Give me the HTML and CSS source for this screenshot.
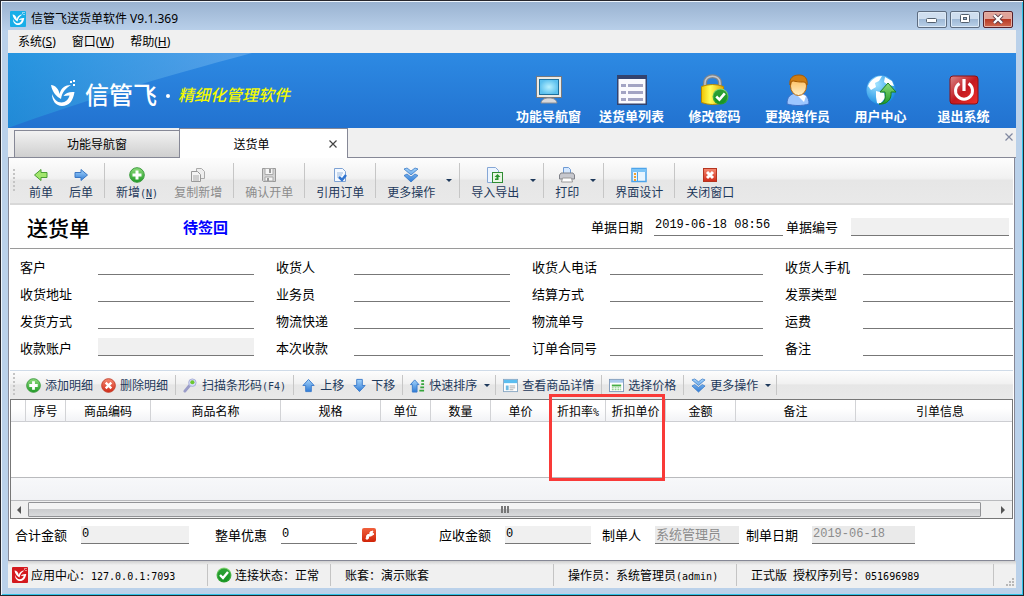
FILE: index.html
```html
<!DOCTYPE html>
<html lang="zh-CN">
<head>
  <title>信管飞送货单软件 V9.1.369</title>
  <meta charset="UTF-8">
  <meta name="viewport" content="width=device-width, initial-scale=1.0">
  <link rel="stylesheet" href="styles.css">
</head>
<body>
  <!-- shared icons -->
  <svg class="defs" aria-hidden="true">
    <defs>
      <linearGradient id="g-green" x1="0" y1="0" x2="0" y2="1"><stop offset="0" stop-color="#8fdc7c"/><stop offset="1" stop-color="#1f9a26"/></linearGradient>
      <linearGradient id="g-blue" x1="0" y1="0" x2="0" y2="1"><stop offset="0" stop-color="#a5d4fb"/><stop offset="1" stop-color="#2f7bd6"/></linearGradient>
      <linearGradient id="g-red" x1="0" y1="0" x2="0" y2="1"><stop offset="0" stop-color="#f58a72"/><stop offset="1" stop-color="#d02a17"/></linearGradient>
      <linearGradient id="g-power" x1="0" y1="0" x2="1" y2="1"><stop offset="0" stop-color="#d88a8a"/><stop offset=".5" stop-color="#c4191f"/><stop offset="1" stop-color="#f0302a"/></linearGradient>
      <linearGradient id="g-lock" x1="0" y1="0" x2="1" y2="0"><stop offset="0" stop-color="#f0c400"/><stop offset=".4" stop-color="#ffff5a"/><stop offset="1" stop-color="#e8a800"/></linearGradient>
      <linearGradient id="g-face" x1="0" y1="0" x2="0" y2="1"><stop offset="0" stop-color="#ffb64c"/><stop offset="1" stop-color="#fff0c8"/></linearGradient>
      <radialGradient id="g-screen"><stop offset="0" stop-color="#b8f1ff"/><stop offset="1" stop-color="#5cc0ee"/></radialGradient>
      <radialGradient id="g-globe" cx=".35" cy=".3" r=".8"><stop offset="0" stop-color="#9fe2ff"/><stop offset="1" stop-color="#0d86e0"/></radialGradient>
      <linearGradient id="g-swoosh" x1="0" y1="0" x2="1" y2="0"><stop offset="0" stop-color="#1fa0dc" stop-opacity=".5"/><stop offset="1" stop-color="#7fb8f0" stop-opacity=".5"/></linearGradient>
    </defs>
    <symbol id="i-bird" viewBox="0 0 26 28">
      <path d="M1 5c4 0 8 4 8.500 9C11 8 15 5 21 5c-5 3-9 7-10 14-4-2-9-7-10-14z"/>
      <path d="M2 14c0 7 4 12 10 12 7 0 11-5 12.500-14-5-.5-9 1-11 4l6-.5c-1 4-4 7-8 7C7 22.500 4 19 2 14z"/>
      <path d="M20 1h2v2h-2zM23 0h2v2h-2zM23 4h2v2h-2z"/>
    </symbol>
    <symbol id="i-plus" viewBox="0 0 16 16">
      <circle cx="8" cy="8" r="7.3" fill="url(#g-green)" stroke="#3d9c3f"/>
      <path d="M6.500 3.500h3v3h3v3h-3v3h-3v-3h-3v-3h3z" fill="#fff"/>
    </symbol>
    <symbol id="i-down2" viewBox="0 0 16 16">
      <path d="M1 2l3-1 4 3 4-3 3 1-7 6zM1 8.500l3-1.500 4 3 4-3 3 1.500-7 6.500z" fill="url(#g-blue)" stroke="#2b6fc0" stroke-width=".7"/>
    </symbol>
    <symbol id="i-check" viewBox="0 0 16 16">
      <circle cx="8" cy="8" r="7.500" fill="url(#g-green)"/><circle cx="8" cy="8" r="6.500" fill="#129022" opacity=".75"/>
      <path d="M4 8l3 3 5-6" fill="none" stroke="#fff" stroke-width="2.400"/>
    </symbol>
  </svg>

  <div class="window">
    <header class="titlebar">
      <svg class="title-icon" viewBox="0 0 16 16"><rect width="16" height="16" rx="1" fill="#18aee8"/><use href="#i-bird" x="2" y="1" width="13" height="14" fill="#fff"/></svg>
      <span class="title-text">信管飞送货单软件 V9.1.369</span>
      <button class="win-btn" aria-label="最小化"><svg width="12" height="10"><rect x=".5" y="4.500" width="10" height="4" rx="1" fill="#fff" stroke="#53606f"/></svg></button>
      <button class="win-btn" aria-label="最大化"><svg width="12" height="10"><rect x="1.500" y=".5" width="9" height="8" rx="1" fill="#fff" stroke="#53606f"/><rect x="4.500" y="3.500" width="3" height="2" fill="#9db6d2" stroke="#53606f"/></svg></button>
      <button class="win-btn win-close" aria-label="关闭"><svg width="12" height="10"><path d="M2 1l8 8M10 1L2 9" stroke="#5b3a45" stroke-width="4"/><path d="M2 1l8 8M10 1L2 9" stroke="#fff" stroke-width="2.400"/></svg></button>
    </header>

    <nav class="menubar">
      <button class="menu">系统(<u>S</u>)</button>
      <button class="menu">窗口(<u>W</u>)</button>
      <button class="menu">帮助(<u>H</u>)</button>
    </nav>

    <div class="banner">
      <svg class="swoosh" viewBox="0 0 244 75" preserveAspectRatio="none"><path d="M0 0h244C150 25 75 48 0 75z" fill="url(#g-swoosh)"/></svg>
      <svg class="brand-logo" viewBox="0 0 26 28" fill="#fff"><use href="#i-bird"/></svg>
      <span class="brand">信管飞</span>
      <span class="dot"></span>
      <em class="slogan">精细化管理软件</em>
      <div class="banner-nav">
        <button class="nav-btn">
          <svg viewBox="0 0 32 32"><rect x="3.500" y="2.500" width="25" height="21" fill="#eceae4" stroke="#77787c"/><rect x="6.500" y="5.500" width="19" height="15" fill="url(#g-screen)" stroke="#1d6f9c"/><path d="M8 29c1-4 4-5 8-5s7 1 8 5z" fill="#d9d9dc" stroke="#8f9095"/></svg>
          功能导航窗
        </button>
        <button class="nav-btn">
          <svg viewBox="0 0 32 32"><path d="M1 1h30v30H1z" fill="#33436f"/><path d="M2.500 5h27v24.500h-27z" fill="#fafafe"/><path d="M5 10h5v3H5zM5 17h5v3H5zM5 24h5v3H5zM12 10h15v3H12zM12 17h15v3H12zM12 24h15v3H12z" fill="#a3a4c4"/></svg>
          送货单列表
        </button>
        <button class="nav-btn">
          <svg viewBox="0 0 32 32"><path d="M6 15V9c0-9 15-9 15 0v6" fill="none" stroke="#7f858c" stroke-width="4"/><path d="M6 15V9c0-9 15-9 15 0v6" fill="none" stroke="#c2c6ca" stroke-width="1.500"/><path d="M2.500 12.500q11-4 22 0v16q-11 4-22 0z" fill="url(#g-lock)" stroke="#b88a00"/><use href="#i-check" x="13" y="14" width="17" height="17"/></svg>
          修改密码
        </button>
        <button class="nav-btn">
          <svg viewBox="0 0 32 32"><path d="M5 30c0-8 4-10 9-11h5c5 1 8 4 8 11-7 2-15 2-22 0z" fill="#9cc6ff" stroke="#3d6fc4"/><path d="M14 20l5 0 5 2-2 6z" fill="#fff"/><ellipse cx="16.500" cy="12" rx="8" ry="9.500" fill="url(#g-face)" stroke="#b56a12"/><path d="M8 11C7 4 11 1 17 1s9 4 8 10c-1-3-3-3-5-3-5 0-8-1-9-1-2 0-2 2-3 4z" fill="#cf7d12" stroke="#a65a05"/></svg>
          更换操作员
        </button>
        <button class="nav-btn">
          <svg viewBox="0 0 32 32"><circle cx="16" cy="16" r="14.500" fill="url(#g-globe)"/><path d="M3 12C6 5 12 2 17 2l-3 5-4 2 1 4-5 3zM20 3l7 4 2 5-6-1-4-3zM11 17l8 2 1 5-5 6-3-1-1-6z" fill="#fff"/><path d="M14 30c6-1 7-6 6-12h-5l8-9 8 9h-5c1 7-4 13-12 12z" fill="url(#g-green)" stroke="#1b7f1c"/></svg>
          用户中心
        </button>
        <button class="nav-btn">
          <svg viewBox="0 0 32 32"><rect x="2" y="2" width="28" height="28" rx="3" fill="url(#g-power)" stroke="#8c1014"/><path d="M11.500 9.500a8.500 8.500 0 1 0 9 0" fill="none" stroke="#fff" stroke-width="3"/><path d="M16 5v12" stroke="#fff" stroke-width="3.200"/></svg>
          退出系统
        </button>
      </div>
    </div>

    <div class="tabs">
      <button class="tab">功能导航窗</button>
      <button class="tab active">送货单<svg class="tab-x" viewBox="0 0 8 8"><path d="M.5.5l7 7M7.500.5l-7 7" stroke="#444" stroke-width="1.200"/></svg></button>
      <button class="tabs-x" aria-label="关闭标签"><svg viewBox="0 0 8 8"><path d="M.5.5l7 7M7.500.5l-7 7" stroke="#8088a0" stroke-width="1.200"/></svg></button>
    </div>

    <main class="page">
      <div class="toolbar">
        <span class="handle"></span>
        <button class="tool"><svg viewBox="0 0 16 16"><path d="M1.500 8L8 2.500v3h6v5H8v3z" fill="#a2e66c" stroke="#4a9e35"/></svg>前单</button>
        <button class="tool"><svg viewBox="0 0 16 16"><path d="M14.500 8L8 2.500v3H2v5h6v3z" fill="url(#g-blue)" stroke="#3c78c4"/></svg>后单</button>
        <span class="sep"></span>
        <button class="tool"><svg viewBox="0 0 16 16"><use href="#i-plus"/></svg><span>新增<span class="half">(<u>N</u>)</span></span></button>
        <button class="tool" disabled><svg viewBox="0 0 16 16"><path d="M6.500 1.500h5l3 3v7h-8z" fill="#eee" stroke="#aaa"/><path d="M1.500 4.500h6l3 3v7h-9z" fill="#f4f4f4" stroke="#999"/><path d="M3 9h6M3 11h6M3 13h6" stroke="#aaa"/></svg>复制新增</button>
        <span class="sep"></span>
        <button class="tool" disabled><svg viewBox="0 0 16 16"><path d="M1.500 1.500h13v13h-12l-1-1z" fill="#d4d4d4" stroke="#999"/><path d="M4 1.500h8v6H4zM4 10h8v4H4z" fill="#f5f5f5" stroke="#aaa"/><path d="M8 2h2v4H8zM6 11h2v3H6z" fill="#999"/></svg>确认开单</button>
        <span class="sep"></span>
        <button class="tool"><svg viewBox="0 0 16 16"><path d="M2.500 1.500h8l3 3v10h-11z" fill="#f4f9ff" stroke="#7ea2d4"/><path d="M5 6h6M5 8h5M5 10h3" stroke="#9bb8dc"/><path d="M7 10l3 3 4-5" fill="none" stroke="#2f74d0" stroke-width="2.500"/></svg>引用订单</button>
        <span class="sep"></span>
        <button class="tool"><svg viewBox="0 0 16 16"><use href="#i-down2"/></svg>更多操作</button>
        <button class="drop" aria-label="更多操作选项"></button>
        <span class="sep"></span>
        <button class="tool"><svg viewBox="0 0 16 16"><path d="M.5.5h8l3 3v12H.5z" fill="#edf5ff" stroke="#86a7d6"/><rect x="5.500" y="5.500" width="10" height="10" fill="#e9f7e4" stroke="#2f8c33"/><path d="M10.500 7l3 3h-2v3H8v-1.500h1.500V10h-2z" fill="#2a9430"/></svg>导入导出</button>
        <button class="drop" aria-label="导入导出选项"></button>
        <span class="sep"></span>
        <button class="tool"><svg viewBox="0 0 16 16"><path d="M4.500 6V.5h5l2 2V6" fill="#d5e8ff" stroke="#6e9ad4"/><path d="M2 6h12l1.500 2v4h-15V8z" fill="#c7c8ce" stroke="#808289"/><path d="M3.500 11h9l1 4h-11z" fill="#fff" stroke="#999"/></svg>打印</button>
        <button class="drop" aria-label="打印选项"></button>
        <span class="sep"></span>
        <button class="tool"><svg viewBox="0 0 16 16"><rect x="1" y="1.500" width="14" height="13" fill="#e8f5ff" stroke="#4da4ea" stroke-width="1.500"/><path d="M1 2h14v3H1z" fill="#7cc4f7"/><path d="M6.500 5v9" stroke="#4da4ea"/><path d="M3 6h2v2H3zM3 9h2v2H3zM3 12h2v2H3z" fill="#f0a030"/></svg>界面设计</button>
        <span class="sep"></span>
        <button class="tool"><svg viewBox="0 0 16 16"><rect x="1.500" y="1.500" width="13" height="13" fill="url(#g-red)" stroke="#b5341f"/><path d="M5 5l6 6M11 5l-6 6" stroke="#fff" stroke-width="3"/></svg>关闭窗口</button>
      </div>

      <div class="doc-head">
        <h1>送货单</h1>
        <strong class="state">待签回</strong>
        <div class="doc-field"><label for="doc-date">单据日期</label><input id="doc-date" class="line" value="2019-06-18 08:56"></div>
        <div class="doc-field doc-no"><label for="doc-no">单据编号</label><input id="doc-no" class="line gray" readonly></div>
      </div>

      <form class="form">
        <div class="field"><label for="f1">客户</label><input id="f1" class="line"></div>
        <div class="field"><label for="f2">收货人</label><input id="f2" class="line"></div>
        <div class="field"><label for="f3">收货人电话</label><input id="f3" class="line"></div>
        <div class="field"><label for="f4">收货人手机</label><input id="f4" class="line"></div>
        <div class="field"><label for="f5">收货地址</label><input id="f5" class="line"></div>
        <div class="field"><label for="f6">业务员</label><input id="f6" class="line"></div>
        <div class="field"><label for="f7">结算方式</label><input id="f7" class="line"></div>
        <div class="field"><label for="f8">发票类型</label><input id="f8" class="line"></div>
        <div class="field"><label for="f9">发货方式</label><input id="f9" class="line"></div>
        <div class="field"><label for="f10">物流快递</label><input id="f10" class="line"></div>
        <div class="field"><label for="f11">物流单号</label><input id="f11" class="line"></div>
        <div class="field"><label for="f12">运费</label><input id="f12" class="line"></div>
        <div class="field"><label for="f13">收款账户</label><input id="f13" class="line gray" readonly></div>
        <div class="field"><label for="f14">本次收款</label><input id="f14" class="line"></div>
        <div class="field"><label for="f15">订单合同号</label><input id="f15" class="line"></div>
        <div class="field"><label for="f16">备注</label><input id="f16" class="line"></div>
      </form>

      <div class="toolbar detail-bar">
        <span class="handle"></span>
        <button class="act"><svg viewBox="0 0 16 16"><use href="#i-plus"/></svg>添加明细</button>
        <button class="act"><svg viewBox="0 0 16 16"><circle cx="8" cy="8" r="7.300" fill="url(#g-red)" stroke="#c4402c"/><path d="M5 5l6 6M11 5l-6 6" stroke="#fff" stroke-width="2.500"/></svg>删除明细</button>
        <span class="sep"></span>
        <button class="act"><svg viewBox="0 0 16 16"><path d="M2 14l5-6" stroke="#9a9cc8" stroke-width="3" stroke-linecap="round"/><circle cx="10" cy="5" r="4" fill="#d3dcf5" stroke="#a9aed8"/><circle cx="10" cy="4.500" r="2.200" fill="#6cc82e"/></svg><span>扫描条形码<span class="half">(F4)</span></span></button>
        <span class="sep"></span>
        <button class="act"><svg viewBox="0 0 16 16"><path d="M8 1.500L14 8h-3v6.500H5V8H2z" fill="url(#g-blue)" stroke="#3c7ccc"/></svg>上移</button>
        <button class="act"><svg viewBox="0 0 16 16"><path d="M8 14.500L2 8h3V1.500h6V8h3z" fill="url(#g-blue)" stroke="#3c7ccc"/></svg>下移</button>
        <span class="sep"></span>
        <button class="act"><svg viewBox="0 0 16 16"><path d="M5 2l4.500 5H7.500v8h-5V7h-2z" fill="url(#g-blue)" stroke="#3c7ccc"/><path d="M12 2h3v2h-3zM12 5.500h3v2h-3zM11 9h4v2h-4zM10 12.500h5v2h-5z" fill="#35a53a"/></svg>快速排序</button>
        <button class="drop" aria-label="快速排序选项"></button>
        <span class="sep"></span>
        <button class="act"><svg viewBox="0 0 16 16"><rect x=".5" y="1.500" width="15" height="13" fill="#fff" stroke="#8ba9c4"/><path d="M1 2h14v3.500H1z" fill="#5cbef0"/><path d="M3 8h3v5H3z" fill="#6dbbe4"/><path d="M7 8.500h6M7 10.500h6M7 12.500h4" stroke="#aaa"/></svg>查看商品详情</button>
        <span class="sep"></span>
        <button class="act"><svg viewBox="0 0 16 16"><rect x=".5" y="1.500" width="15" height="13" fill="#fff" stroke="#7e98b8"/><path d="M1 2h14v3H1z" fill="#a9c9ec"/><path d="M3 7h10v2H3z" fill="#46ad45"/><path d="M3 10.500h10M3 12.500h10" stroke="#6cc06a" stroke-dasharray="2 1"/></svg>选择价格</button>
        <span class="sep"></span>
        <button class="act"><svg viewBox="0 0 16 16"><use href="#i-down2"/></svg>更多操作</button>
        <button class="drop" aria-label="明细更多操作选项"></button>
        <span class="sep"></span>
      </div>

      <section class="grid">
        <div class="grid-view">
          <table>
            <colgroup>
              <col class="c-mark"><col class="c-no"><col class="c-code"><col class="c-name"><col class="c-spec"><col class="c-unit"><col class="c-qty"><col class="c-price"><col class="c-rate"><col class="c-dprice"><col class="c-sum"><col class="c-memo"><col>
            </colgroup>
            <thead>
              <tr><th></th><th>序号</th><th>商品编码</th><th>商品名称</th><th>规格</th><th>单位</th><th>数量</th><th>单价</th><th>折扣率<span class="half">%</span></th><th>折扣单价</th><th>金额</th><th>备注</th><th>引单信息</th></tr>
            </thead>
            <tbody><tr><td colspan="13"></td></tr></tbody>
            <tfoot><tr><td colspan="13"></td></tr></tfoot>
          </table>
        </div>
        <div class="hscroll">
          <span class="arrow-left"></span>
          <span class="thumb"><i></i><i></i><i></i></span>
          <span class="arrow-right"></span>
        </div>
        <div class="highlight"></div>
      </section>

      <div class="totals">
        <div class="total"><label for="t1">合计金额</label><input id="t1" class="line gray t-sum" value="0" readonly></div>
        <div class="total"><label for="t2">整单优惠</label><input id="t2" class="line t-off" value="0"><button class="fix" aria-label="设置优惠"><svg viewBox="0 0 14 14"><path d="M4 11l1-4 3-1V4l3-1-1 2 2 1-3 2-2 0-1 3z" fill="#fff" stroke="#fff"/></svg></button></div>
        <div class="total"><label for="t3">应收金额</label><input id="t3" class="line gray t-due" value="0" readonly></div>
        <div class="total"><label for="t4">制单人</label><input id="t4" class="line dim t-user" value="系统管理员" disabled></div>
        <div class="total"><label for="t5">制单日期</label><input id="t5" class="line dim t-date" value="2019-06-18" disabled></div>
      </div>
    </main>

    <footer class="statusbar">
      <div class="pane"><svg viewBox="0 0 16 16"><rect width="16" height="16" rx="1" fill="#d4191e"/><use href="#i-bird" x="2" y="1" width="13" height="14" fill="#fff"/></svg><span>应用中心：<span class="half">127.0.0.1:7093</span></span></div>
      <div class="pane"><svg viewBox="0 0 16 16"><use href="#i-check"/></svg><span>连接状态：正常</span></div>
      <div class="pane text">账套：演示账套</div>
      <div class="pane text"><span>操作员：系统管理员<span class="half">(admin)</span></span></div>
      <div class="pane text"><span>正式版<span class="half">&nbsp;</span>授权序列号：<span class="half">051696989</span></span></div>
      <div class="grip"><svg viewBox="0 0 9 9"><path d="M7 1h2v2H7zM4 4h2v2H4zM7 4h2v2H7zM1 7h2v2H1zM4 7h2v2H4zM7 7h2v2H7z" fill="#b8b8b8"/></svg></div>
    </footer>
  </div>
</body>
</html>
```

FILE: styles.css
```css
* {
  box-sizing: border-box;
}
body {
  margin: 0;
  font-family: "Noto Sans CJK SC", sans-serif;
  font-size: 12px;
  line-height: 16px;
  color: #000;
}
button {
  margin: 0;
  padding: 0;
  border: 0;
  background: none;
  font: inherit;
  color: inherit;
}
svg {
  display: block;
  flex: none;
}
.defs {
  position: absolute;
  width: 0;
  height: 0;
}
.half {
  font-family: "DejaVu Sans Mono", monospace;
  font-size: 10px;
  line-height: 10px;
}

/* window frame */
.window {
  display: flex;
  flex-direction: column;
  min-height: 100vh;
  padding: 0 7px 7px;
  border: 1px solid #26262c;
  background: #bad1ea;
  box-shadow: inset 1px 1px 0 #eef5fc, inset -1px -1px 0 #2fc3e8;
}
.titlebar {
  display: flex;
  align-items: center;
  height: 29px;
  margin: 1px -6px -1px;
  padding: 5px 9px 0 8px;
  gap: 3px;
  background: linear-gradient(#9ab3d1, #b9d0ea);
  font-family: "Noto Sans", "Noto Sans CJK SC", sans-serif;
}
.title-icon {
  width: 16px;
  height: 16px;
}
.title-text {
  flex: 1;
  padding-left: 2px;
}
.win-btn {
  display: flex;
  align-items: center;
  justify-content: center;
  width: 30px;
  height: 17px;
  border: 1px solid #5d6c80;
  border-radius: 2px;
  background: linear-gradient(#cfdeef 45%, #9fb9d6 50%, #b9d0e8);
  box-shadow: inset 0 0 0 1px #dce9f6;
}
.win-close {
  border-color: #56202a;
  background: linear-gradient(#e0a49a 45%, #b93a25 50%, #cf6a50);
  box-shadow: inset 0 0 0 1px #e6b0a5;
}
.menubar {
  display: flex;
  gap: 16px;
  height: 23px;
  padding: 0 10px;
  background: #f0f0f0;
  font-family: "Noto Sans", "Noto Sans CJK SC", sans-serif;
}

/* banner */
.banner {
  position: relative;
  display: flex;
  align-items: center;
  height: 75px;
  padding: 6px 11px 0 42px;
  background: linear-gradient(#2d8ae3, #2272d0);
  color: #fff;
}
.swoosh {
  position: absolute;
  left: 0;
  top: 0;
  width: 244px;
  height: 75px;
}
.brand-logo {
  position: relative;
  width: 26px;
  height: 28px;
}
.brand {
  position: relative;
  margin-left: 9px;
  font-size: 24px;
  line-height: 30px;
  font-weight: 500;
}
.dot {
  width: 4px;
  height: 4px;
  margin: 4px 8px 0 9px;
  border-radius: 2px;
  background: #fff;
}
.slogan {
  font-size: 16px;
  line-height: 20px;
  font-weight: 500;
  color: #f4f900;
}
.banner-nav {
  display: flex;
  align-self: flex-end;
  margin-left: auto;
}
.nav-btn {
  display: flex;
  flex-direction: column;
  align-items: center;
  width: 83px;
  height: 54px;
  gap: 2px;
  font-size: 13px;
  font-weight: bold;
}
.nav-btn svg {
  width: 32px;
  height: 32px;
}

/* tabs */
.tabs {
  display: flex;
  align-items: flex-end;
  height: 30px;
  padding-left: 6px;
  background: #f0f0f0;
  box-shadow: inset 0 -1px 0 #868896;
}
.tab {
  width: 165px;
  height: 28px;
  border: 1px solid #868896;
  border-right: 0;
  background: linear-gradient(#f2f2f2, #cfcfcf);
}
.tab.active {
  position: relative;
  width: 169px;
  height: 30px;
  padding-right: 24px;
  border: 1px solid #868896;
  border-bottom: 0;
  background: #fff;
}
.tab-x {
  position: absolute;
  right: 10px;
  top: 11px;
  width: 8px;
  height: 8px;
}
.tabs-x {
  align-self: flex-start;
  margin: 5px 3px 0 auto;
}
.tabs-x svg {
  width: 8px;
  height: 8px;
}

/* page */
.page {
  flex: 1;
  display: flex;
  flex-direction: column;
  margin-right: 1px;
  padding: 0 1px;
  border: 1px solid #868896;
  border-top: 0;
  background: #fff;
}
.toolbar {
  display: flex;
  align-items: center;
  height: 47px;
  padding-left: 3px;
  border-bottom: 2px solid #d8d8d8;
  background: linear-gradient(#fdfdfd, #f1f1f1 45%, #e6e6e6 50%, #e9e9e9);
  color: #1e395b;
}
.handle {
  width: 2px;
  height: 24px;
  margin-right: 6px;
  background: repeating-linear-gradient(#c4c4c4 0 2px, transparent 2px 4px);
}
.tool {
  display: flex;
  flex-direction: column;
  align-items: center;
  padding: 6px 8px 0;
  gap: 1px;
}
.tool:disabled {
  color: #8c8c8c;
}
.tool svg {
  width: 16px;
  height: 16px;
}
.sep {
  width: 1px;
  align-self: stretch;
  margin: 5px 3px;
  background: #c6c6c6;
}
.drop {
  width: 13px;
  padding: 0 3px;
}
.drop::before {
  content: "";
  display: block;
  width: 0;
  border: 3px solid transparent;
  border-top-color: #1e395b;
  border-bottom: 0;
}
.doc-head {
  display: flex;
  align-items: center;
  height: 44px;
  padding: 0 4px 0 17px;
  border-bottom: 1px solid #9a9a9a;
  font-size: 13px;
}
.doc-head h1 {
  width: 156px;
  margin: 0;
  font-size: 21px;
  line-height: 28px;
  font-weight: 500;
}
.state {
  flex: 1;
  font-size: 15px;
  color: #00f;
}
.doc-field {
  display: flex;
  align-items: center;
  gap: 11px;
  margin-right: 3px;
}
.doc-field .line {
  width: 129px;
}
.doc-no {
  gap: 13px;
  margin-right: 0;
}
.doc-no .line {
  width: 158px;
}
.line {
  height: 18px;
  min-width: 0;
  padding: 0 1px 2px;
  border: 0;
  border-bottom: 1px solid #777;
  border-radius: 0;
  background: #fff;
  font-family: "Liberation Mono", "Noto Sans CJK SC", monospace;
  font-size: 12px;
  color: #000;
}
.gray {
  background: #f0f0f0;
}
.dim {
  background: #eaeaea;
  color: #8c8c8c;
}
.form {
  display: grid;
  grid-template-columns: 234fr 234fr 231fr 228fr;
  gap: 7px 22px;
  padding: 6px 0 14px 10px;
  font-size: 13px;
}
.field {
  display: flex;
  align-items: flex-end;
  min-width: 0;
  height: 20px;
}
.field label {
  flex: none;
  width: 78px;
}
.field .line {
  flex: 1;
}

/* detail grid */
.detail-bar {
  height: 29px;
  border-top: 1px solid #cfdbe8;
  border-bottom: 0;
}
.detail-bar .handle {
  margin-right: 7px;
}
.detail-bar .drop {
  width: 11px;
}
.act {
  display: flex;
  align-items: center;
  padding: 0 4px;
  gap: 4px;
}
.act svg {
  width: 15px;
  height: 15px;
}
.detail-bar .sep {
  margin: 4px 3px;
}
.grid {
  position: relative;
  border: 1px solid #777;
}
.grid-view {
  overflow: hidden;
}
table {
  width: 1014px;
  min-width: 100%;
  table-layout: fixed;
  border-spacing: 0;
}
.c-mark { width: 15px; }
.c-no { width: 40px; }
.c-code { width: 85px; }
.c-name { width: 130px; }
.c-spec { width: 100px; }
.c-unit { width: 50px; }
.c-qty, .c-price, .c-dprice { width: 60px; }
.c-rate { width: 55px; }
.c-sum { width: 70px; }
.c-memo { width: 120px; }
th {
  height: 22px;
  padding: 0;
  border-right: 1px solid #d2d3d6;
  border-bottom: 1px solid #cdced2;
  background: linear-gradient(#fff 40%, #f2f3f6);
  font-weight: normal;
  white-space: nowrap;
}
tbody td {
  height: 55px;
  padding: 0;
}
tfoot td {
  height: 24px;
  padding: 0;
  border-top: 1px solid #b9babd;
  border-bottom: 1px solid #b9babd;
  background: linear-gradient(#f7f8fa, #f1f2f5);
}
.hscroll {
  display: flex;
  align-items: center;
  height: 17px;
  background: #f0f0f0;
}
.arrow-left, .arrow-right {
  flex: none;
  width: 17px;
}
.arrow-left::before, .arrow-right::before {
  content: "";
  display: block;
  width: 0;
  margin-left: 6px;
  border: 4px solid transparent;
  border-right-color: #555;
  border-left: 0;
}
.arrow-right::before {
  border: 4px solid transparent;
  border-left-color: #555;
  border-right: 0;
}
.thumb {
  flex: 1;
  display: flex;
  align-items: center;
  justify-content: center;
  gap: 1px;
  height: 15px;
  margin-right: 14px;
  border: 1px solid #929396;
  border-radius: 1px;
  background: linear-gradient(#f4f4f4 45%, #cbccce 50%, #d9dadc);
}
.thumb i {
  width: 2px;
  height: 7px;
  background: #777;
}
.highlight {
  position: absolute;
  left: 538px;
  top: -6px;
  width: 116px;
  height: 87px;
  border: 3px solid #f93a38;
}

/* totals */
.totals {
  flex: 1;
  display: grid;
  grid-template-columns: 200fr 224fr 163fr 144fr 267fr;
  align-items: start;
  padding: 7px 0 0 5px;
  font-size: 13px;
}
.total {
  display: flex;
  align-items: center;
  gap: 14px;
  min-width: 0;
  height: 18px;
}
.total label {
  flex: none;
}
.t-sum { width: 108px; }
.t-off { width: 76px; }
.t-due { width: 86px; }
.t-user { width: 84px; font-size: 13px; }
.t-date { width: 103px; }
.fix {
  width: 14px;
  height: 14px;
  margin-left: -9px;
  border-radius: 2px;
  background: linear-gradient(#f0603c, #d02408);
}

/* status bar */
.statusbar {
  display: grid;
  grid-template-columns: 200fr 123fr 223fr 183fr 257fr 22px;
  height: 27px;
  padding: 3px 0 2px;
  background: linear-gradient(#cfcfcf, #f0f0f0 4px);
}
.pane {
  display: flex;
  align-items: center;
  gap: 3px;
  padding-left: 4px;
  border-right: 1px solid #c4c4c4;
  white-space: nowrap;
}
.pane + .pane {
  padding-left: 8px;
}
.pane + .text {
  padding-left: 14px;
}
.pane svg {
  width: 16px;
  height: 16px;
}
.grip {
  display: flex;
  align-items: flex-end;
  justify-content: flex-end;
  padding-right: 2px;
}
.grip svg {
  width: 9px;
  height: 9px;
}
```
